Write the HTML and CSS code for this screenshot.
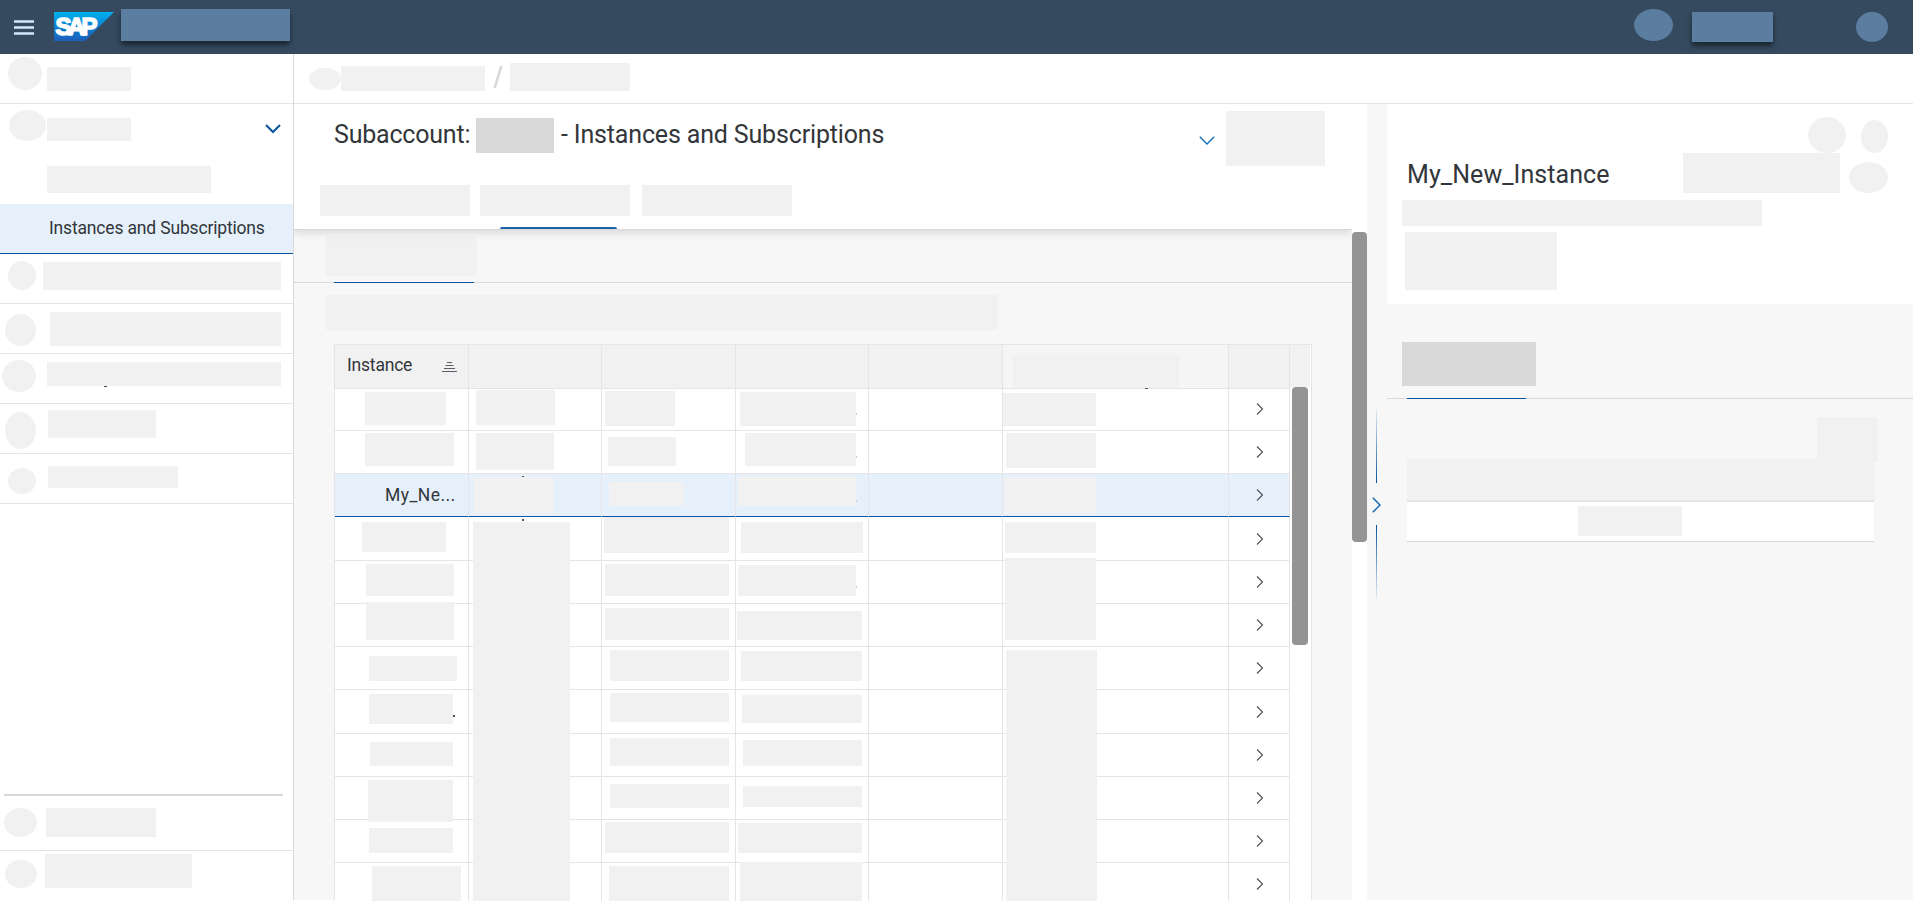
FILE: index.html
```html
<!DOCTYPE html>
<html lang="en">
<head>
<meta charset="utf-8">
<title>Instances and Subscriptions</title>
<link rel="stylesheet" href="styles.css">
</head>
<body>
<div class="app">
  <header class="shell">
    <svg class="burger" width="20" height="15" viewBox="0 0 20 15"><path d="M0 1.5h20M0 7.5h20M0 13.5h20" stroke="#d1e8ff" stroke-width="2.7"/></svg>
    <svg class="logo" width="60" height="29" viewBox="0 0 60 29">
      <defs><linearGradient id="g" x1="0" y1="0" x2="0" y2="1"><stop offset="0" stop-color="#00b1f0"/><stop offset=".5" stop-color="#0b80d0"/><stop offset="1" stop-color="#1e5fbb"/></linearGradient></defs>
      <path d="M0 0H60L31 29H0Z" fill="url(#g)"/>
      <text class="logo-text" x="1.5" y="22.5" textLength="42" lengthAdjust="spacing">SAP</text>
    </svg>
    <div class="shell-mask product"></div>
    <div class="shell-dot search"></div>
    <div class="shell-mask user"></div>
    <div class="shell-dot avatar"></div>
  </header>

  <div class="body">
    <nav class="side">
      <div class="item i1"><i class="dot"></i><i class="mask"></i></div>
      <div class="item i2"><i class="dot"></i><i class="mask"></i><svg class="arrow" width="16" height="10" viewBox="0 0 16 10"><path d="M1 1l7 7 7-7" fill="none" stroke="#0854a0" stroke-width="2"/></svg></div>
      <div class="item i3"><i class="mask"></i></div>
      <div class="item selected">Instances and Subscriptions</div>
      <div class="item i5"><i class="dot"></i><i class="mask"></i></div>
      <div class="item i6"><i class="dot"></i><i class="mask"></i></div>
      <div class="item i7"><i class="dot"></i><i class="mask"></i></div>
      <div class="item i8"><i class="dot"></i><i class="mask"></i></div>
      <div class="item i9"><i class="dot"></i><i class="mask"></i></div>
      <div class="side-foot">
        <div class="item f1"><i class="dot"></i><i class="mask"></i></div>
        <div class="item f2"><i class="dot"></i><i class="mask"></i></div>
      </div>
    </nav>

    <div class="content">
      <div class="crumbs">
        <i class="dot"></i><i class="mask c1"></i>
        <svg class="slash" width="10" height="22" viewBox="0 0 10 22"><path d="M1.7 22L8.3 0" stroke="#d9d9d9" stroke-width="2.6"/></svg>
        <i class="mask c2"></i>
      </div>
      <div class="columns">
        <main class="list">
          <section class="head">
            <div class="title-row">
              <h1><span class="t1">Subaccount:</span><i class="dark-mask"></i><span class="t2">- Instances and Subscriptions</span></h1>
              <svg class="expand" width="16" height="9" viewBox="0 0 16 9"><path d="M.8 .8L8 8l7.2-7.2" fill="none" stroke="#0a6ab8" stroke-width="1.3"/></svg>
              <i class="mask action"></i>
            </div>
            <div class="tabs"><i class="mask"></i><i class="mask active"></i><i class="mask"></i></div>
          </section>
          <div class="scroll-area">
            <div class="subtabs"><i class="mask"></i></div>
            <i class="mask filter"></i>
            <div class="table">
              <div class="thead">
                <div class="th first"><span>Instance</span><svg width="15" height="10" viewBox="0 0 15 10"><path d="M5 .5h5M3.5 3.5h8M2 6.5h11M0 9.5h15" stroke="#5a6066"/></svg></div>
                <div class="th"></div><div class="th"></div><div class="th"></div><div class="th"></div>
                <div class="th light"><i class="mask"></i></div><div class="th"></div><div class="th last"></div>
              </div>
              <div class="tbody"><div class="rows" id="rows"></div><div class="track"><div class="thumb"></div></div></div>
            </div>
          </div>
        </main>
        <div class="page-track"><div class="thumb"></div></div>
        <div class="splitter"><i class="line up"></i><svg width="9" height="16" viewBox="0 0 9 16"><path d="M.8 .8L8 8 .8 15.2" fill="none" stroke="#0a62b0" stroke-width="1.4"/></svg><i class="line down"></i></div>
        <aside class="detail">
          <section class="detail-head">
            <div class="tools"><i class="dot a"></i><i class="dot b"></i></div>
            <div class="detail-title"><h2>My_New_Instance</h2><i class="mask"></i><i class="dot"></i></div>
            <i class="mask m1"></i><i class="mask m2"></i>
          </section>
          <div class="detail-tabs"><i class="dark-mask"></i></div>
          <div class="detail-table">
            <i class="mask tool"></i>
            <div class="band"></div>
            <div class="line-item"><i class="mask"></i></div>
          </div>
        </aside>
      </div>
    </div>
  </div>
</div>
<script src="table.js"></script>
</body>
</html>
```
FILE: table.js
```js
// Placeholder boxes per row: [column, left, top, width, height], offsets relative to the cell.
// marks: small specks drawn inside a cell, [column, left, top, width, height].
const rows = [
  { h: 43, cells: [[0,30,4,81,33],[1,7,2,79,35],[2,3,3,70,35],[3,4,4,116,34],[5,0,5,93,33]], tick: [3,25], marks: [[5,142,0,3,1]] },
  { h: 43, cells: [[0,30,2,89,33],[1,7,2,78,37],[2,6,6,68,29],[3,9,2,111,33],[5,3,2,90,35]], tick: [3,25] },
  { h: 43, selected: true, text: "My_Ne...", cells: [[1,5,3,80,37],[2,7,8,75,24],[3,2,2,118,30],[5,1,3,92,37]], tick: [3,26], marks: [[1,53,2,2,1]] },
  { h: 44, cells: [[0,27,5,84,30],[1,4,5,97,379],[2,2,0,125,36],[3,5,5,122,31],[5,2,5,91,31]], marks: [[1,53,2,2,2]] },
  { h: 43, cells: [[0,31,3,88,32],[2,3,3,124,32],[3,2,4,118,31],[5,2,-3,91,82]], tick: [3,25] },
  { h: 43, cells: [[0,31,-2,88,38],[2,3,4,124,32],[3,1,7,125,29]] },
  { h: 43, cells: [[0,34,9,88,25],[2,8,3,119,31],[3,5,4,121,30],[5,3,3,91,251]] },
  { h: 44, cells: [[0,34,4,84,30],[2,8,3,119,29],[3,6,5,120,28]], dot: true },
  { h: 43, cells: [[0,35,8,83,24],[2,8,4,119,28],[3,7,6,119,26]] },
  { h: 43, cells: [[0,33,3,85,42],[2,8,7,119,24],[3,7,9,119,21]] },
  { h: 43, cells: [[0,34,8,84,25],[2,3,2,124,31],[3,2,3,124,30]] },
  { h: 43, cells: [[0,37,3,89,35],[2,7,3,120,35],[3,4,-1,122,39]] }
];

const chevron = '<svg width="8" height="12" viewBox="0 0 8 12"><path d="M1 .5L6.5 6 1 11.5" fill="none" stroke="#4a5055" stroke-width="1.1"/></svg>';

document.getElementById("rows").innerHTML = rows.map(row => {
  let html = "";
  for (let c = 0; c < 7; c++) {
    let inner = "";
    const box = row.cells.find(b => b[0] === c);
    const mark = (row.marks || []).find(m => m[0] === c);
    if (c === 0 && row.text) inner += `<span class="name">${row.text}</span>`;
    if (box) inner += `<i class="mask" style="margin:${box[2]}px 0 0 ${box[1]}px;width:${box[3]}px;height:${box[4]}px"></i>`;
    if (c === 0 && row.dot) inner += '<i class="period"></i>';
    if (row.tick && row.tick[0] === c) inner += `<i class="tick" style="margin-top:${row.tick[1]}px"></i>`;
    if (mark) inner += `<i class="mark" style="left:${mark[1]}px;top:${mark[2]}px;width:${mark[3]}px;height:${mark[4]}px"></i>`;
    if (c === 6) inner += chevron;
    html += `<div class="td${c === 6 ? " nav" : ""}">${inner}</div>`;
  }
  return `<div class="tr${row.selected ? " selected" : ""}" style="height:${row.h}px">${html}</div>`;
}).join("");
```
FILE: styles.css
```css
* { box-sizing: border-box; }
body { margin: 0; background: #fff; color: #32363a; font-family: Roboto, "Liberation Sans", sans-serif; font-size: 17.5px; overflow: hidden; }
h1, h2 { margin: 0; font-weight: 400; font-size: 25px; line-height: 30px; white-space: nowrap; }
svg { display: block; flex: none; }
.app { height: 901px; overflow: hidden; }
.mask { display: block; flex: none; background: #f1f1f1; }
.dark-mask { display: block; flex: none; background: #d9d9d9; }
.dot { display: block; flex: none; border-radius: 50%; background: #f1f1f1; }

/* shell bar */
.shell { display: flex; align-items: flex-start; height: 54px; background: #354a5f; }
.burger { margin: 20px 0 0 14px; }
.logo { margin: 12px 0 0 20px; }
.logo-text { font: 700 24px "Liberation Sans", sans-serif; fill: #fff; stroke: #fff; stroke-width: 1.6px; }
.shell-mask { background: #5b7da0; box-shadow: 0 4px 5px rgba(0, 0, 0, .5); }
.shell-dot { border-radius: 50%; background: #5b7da0; }
.product { width: 169px; height: 32px; margin: 9px 0 0 7px; }
.search { width: 39px; height: 32px; margin: 9px 0 0 auto; }
.user { width: 81px; height: 30px; margin: 12px 0 0 19px; }
.avatar { width: 32px; height: 30px; margin: 12px 25px 0 83px; }

.body { display: flex; height: 846px; }

/* side navigation */
.side { display: flex; flex-direction: column; width: 294px; border-right: 1px solid #d9d9d9; }
.item { display: flex; align-items: flex-start; flex: none; height: 50px; border-bottom: 1px solid #e5e5e5; }
.i1 .dot { width: 34px; height: 33px; margin: 3px 5px 0 8px; }
.i1 .mask { width: 84px; height: 24px; margin-top: 13px; }
.i2, .i3 { border-bottom: 0; }
.i2 .dot { width: 37px; height: 31px; margin: 6px 1px 0 9px; }
.i2 .mask { width: 84px; height: 23px; margin-top: 14px; }
.arrow { margin: 20px 12px 0 auto; }
.i3 .mask { width: 164px; height: 27px; margin: 12px 0 0 47px; }
.item.selected { align-items: center; padding: 0 0 2px 49px; background: #e5f0fa; border-bottom-color: #0854a0; letter-spacing: -.17px; white-space: nowrap; }
.i5 .dot { width: 28px; height: 29px; margin: 7px 7px 0 8px; }
.i5 .mask { width: 238px; height: 28px; margin-top: 8px; }
.i6 .dot { width: 31px; height: 32px; margin: 10px 14px 0 5px; }
.i6 .mask { width: 231px; height: 34px; margin-top: 8px; }
.i7 .dot { width: 34px; height: 32px; margin: 6px 11px 0 2px; }
.i7 .mask { width: 234px; height: 24px; margin-top: 8px; }
.i7 .mask::after { content: ""; display: block; width: 3px; height: 1px; margin-left: 57px; transform: translateY(24px); background: #444; }
.i8 .dot { width: 31px; height: 37px; margin: 8px 12px 0 5px; }
.i8 .mask { width: 108px; height: 28px; margin-top: 6px; }
.i9 .dot { width: 28px; height: 26px; margin: 14px 12px 0 8px; }
.i9 .mask { width: 130px; height: 22px; margin-top: 12px; }
.side-foot { margin-top: auto; }
.side-foot::before { content: ""; display: block; width: 279px; height: 2px; margin-left: 4px; background: #d9d9d9; }
.f1 { height: 55px; }
.f1 .dot { width: 33px; height: 29px; margin: 12px 9px 0 4px; }
.f1 .mask { width: 110px; height: 29px; margin-top: 12px; }
.f2 { height: 49px; border-bottom: 0; }
.f2 .dot { width: 32px; height: 28px; margin: 9px 8px 0 5px; }
.f2 .mask { width: 147px; height: 34px; margin-top: 3px; }

/* breadcrumb */
.content { display: flex; flex-direction: column; flex: 1; min-width: 0; }
.crumbs { display: flex; align-items: flex-start; flex: none; height: 50px; border-bottom: 1px solid #e5e5e5; }
.crumbs .dot { width: 32px; height: 22px; margin: 14px 0 0 15px; }
.c1 { width: 144px; height: 25px; margin-top: 12px; }
.slash { margin: 12px 7px 0 8px; }
.c2 { width: 120px; height: 28px; margin-top: 9px; }
.columns { display: flex; flex: 1; min-height: 0; }

/* page header */
.list { display: flex; flex-direction: column; width: 1058px; }
.head { display: flex; flex-direction: column; flex: none; height: 126px; border-bottom: 1px solid #d9d9d9; background: #fff; box-shadow: 0 3px 8px rgba(0, 0, 0, .12); clip-path: inset(0 0 -12px 0); z-index: 1; }
.title-row { display: flex; align-items: flex-start; height: 81px; }
h1 { display: flex; align-items: flex-start; }
.t1 { width: 142px; margin: 16px 0 0 40px; letter-spacing: -.2px; }
h1 .dark-mask { width: 78px; height: 35px; margin-top: 14px; }
.t2 { margin: 16px 0 0 7px; letter-spacing: -.16px; }
.expand { margin: 32px 11px 0 auto; }
.action { width: 99px; height: 55px; margin: 7px 27px 0 0; }
.tabs { display: flex; gap: 10px; padding-left: 26px; height: 44px; }
.tabs .mask { width: 150px; height: 31px; }
.tabs .mask:last-child { margin-left: 2px; }
.tabs .active::after { content: ""; display: block; width: 117px; height: 2px; margin-left: 20px; transform: translateY(42px); border-radius: 2px 2px 0 0; background: #1a61a8; }

/* list content */
.scroll-area { display: flex; flex-direction: column; flex: 1; min-height: 0; background: #f7f7f7; }
.subtabs { flex: none; height: 53px; padding: 7px 0 0 32px; border-bottom: 1px solid #d9d9d9; }
.subtabs .mask { width: 151px; height: 39px; }
.subtabs .mask::after { content: ""; display: block; width: 140px; height: 1px; margin-left: 8px; transform: translateY(45px); background: #0854a0; }
.filter { width: 672px; height: 35px; margin: 12px 0 14px 32px; }
.table { display: flex; flex-direction: column; flex: 1; min-height: 0; width: 978px; margin-left: 40px; border: 1px solid #e5e5e5; border-bottom: 0; background: #fff; }
.thead, .tr { display: grid; grid-template-columns: 134px 133px 134px 133px 134px 226px 61px; }
.thead { flex: none; grid-template-columns: 134px 133px 134px 133px 134px 226px 61px 20px; height: 43px; }
.th { border-right: 1px solid #e5e5e5; border-bottom: 1px solid #e5e5e5; background: #f1f1f1; }
.th.first { display: flex; align-items: flex-start; justify-content: space-between; padding: 5px 11px 0 12px; line-height: 30px; letter-spacing: -.2px; }
.th.first svg { margin-top: 12px; }
.th.light { background: #f5f5f5; }
.th.light .mask { width: 166px; height: 33px; margin: 10px 0 0 10px; }
.th.last { border: 0; height: 42px; }
.tbody { display: flex; flex: 1; min-height: 0; }
.rows { width: 955px; height: 513px; }
.td { position: relative; display: flex; align-items: flex-start; min-width: 0; height: inherit; border-right: 1px solid #e5e5e5; border-bottom: 1px solid #e5e5e5; }
.tr.selected .td { background: #e5f0fa; border-bottom-color: #0854a0; }
.tr .mask { position: relative; z-index: 1; }
.name { margin: 6px 0 0 50px; line-height: 30px; letter-spacing: .45px; }
.nav { justify-content: center; align-items: center; padding-left: 2px; }
.period { width: 2px; height: 2px; margin-top: 25px; background: #555; }
.tick { width: 1px; height: 2px; background: #ccc; }
.mark { position: absolute; background: #555; }
.track { width: 21px; padding-left: 2px; }
.track .thumb { width: 16px; height: 258px; margin-top: -1px; }
.thumb { border-radius: 4px; background: #949494; }
.page-track { width: 15px; padding-top: 128px; background: #fff; }
.page-track .thumb { height: 310px; }

/* column splitter */
.splitter { display: flex; flex-direction: column; align-items: center; width: 20px; padding: 305px 2px 0 0; background: #f7f7f7; }
.splitter svg { margin: 14px 0 12px 0; }
.line { display: block; flex: none; width: 1px; height: 74px; }
.up { background: linear-gradient(#e5ecf3, #0854a0); }
.down { background: linear-gradient(#0854a0, #e5ecf3); }

/* detail panel */
.detail { flex: 1; min-width: 0; background: #f7f7f7; }
.detail-head { height: 200px; background: #fff; }
.tools { display: flex; height: 49px; padding-left: 421px; }
.tools .a { width: 38px; height: 36px; margin-top: 13px; }
.tools .b { width: 27px; height: 33px; margin: 16px 0 0 15px; }
.detail-title { display: flex; align-items: flex-start; height: 47px; }
.detail-title h2 { width: 276px; margin: 7px 0 0 20px; letter-spacing: .07px; }
.detail-title .mask { width: 157px; height: 40px; }
.detail-title .dot { width: 39px; height: 31px; margin: 9px 0 0 9px; }
.m1 { width: 360px; height: 26px; margin-left: 15px; }
.m2 { width: 152px; height: 58px; margin: 6px 0 0 18px; }
.detail-tabs { height: 95px; padding: 38px 0 0 15px; border-bottom: 1px solid #d9d9d9; }
.detail-tabs .dark-mask { width: 134px; height: 44px; }
.detail-tabs .dark-mask::after { content: ""; display: block; width: 119px; height: 1px; margin-left: 5px; transform: translateY(56px); background: #0854a0; }
.detail-table { width: 467px; margin-left: 20px; padding-top: 18px; }
.tool { width: 61px; height: 45px; margin: 0 0 -3px 410px; }
.band { height: 43px; background: #f1f1f1; border-bottom: 2px solid #e5e5e5; }
.line-item { height: 40px; padding: 4px 0 0 171px; background: #fff; border-bottom: 1px solid #d9d9d9; }
.line-item .mask { width: 104px; height: 30px; }
```
